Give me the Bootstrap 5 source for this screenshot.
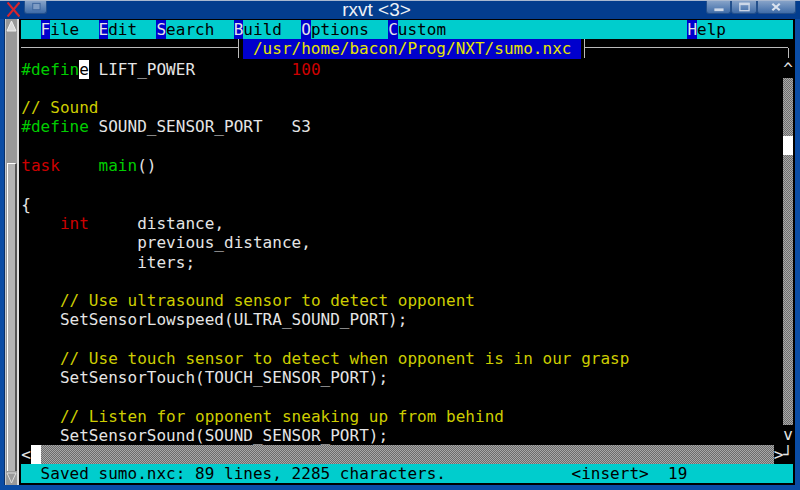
<!DOCTYPE html>
<html lang="en">
<head>
<meta charset="utf-8">
<title>rxvt</title>
<link rel="stylesheet" href="https://cdn.jsdelivr.net/npm/bootstrap@5.3.0/dist/css/bootstrap.min.css">
<style>
html,body{width:800px;height:490px;overflow:hidden;background:#0a4ca5;}
.wm-frame{width:800px;height:490px;background:#0a4ca5;}
.wm-title{height:19px;flex:none;background:#033d8e;border-top:1px solid #a8b8d0;color:#eef2f8;font:19px/17px "Liberation Sans",sans-serif;}
.wm-left{width:120px;}
.wm-right{width:167px;padding-right:4px;}
.wm-x{width:13px;height:15px;margin:1px 4px 0 7px;display:block;}
.wm-btn{height:13px;display:block;background:linear-gradient(#86a2c8,#3f6ca8);border:1px solid #23508c;border-top:0;border-radius:0 0 3px 3px;}
.btn-a{width:23px;}.btn-b{width:25px;}.btn-c{width:26px;}.btn-d{width:39px;}
.wm-glyph{width:100%;height:100%;display:block;}
.wm-body{height:466px;flex:none;padding:0 5px;}
.sb-left{width:14px;flex:none;background:#999;border-left:1px solid #c4c8cc;border-right:2px solid #ddd;box-shadow:-1px 0 0 #0a2f66;}
.sb-arrow{width:11px;height:14px;flex:none;display:block;}
.sb-thumb{flex:1;margin-top:130px;background:#b4b4b4;border-top:1px solid #fff;border-left:1px solid #fff;border-right:2px solid #555;margin-left:1px;}
.term{flex:1;background:#000;color:#e5e5e5;font:16px/19.3px "DejaVu Sans Mono",monospace;letter-spacing:.02px;padding:1px 2px 0 2.3px;}
.term-line{height:19.3px;white-space:pre;flex:none;}
.menu-bar{background:#00cdcd;color:#000;}
.menu-bar b{font-weight:400;background:#0000cd;color:#e5e5e5;}
.file-row{height:19.3px;flex:none;}
.rule{height:1px;background:#bbb;margin-bottom:2px;}
.rule-a{width:217px;flex:none;}
.rule-b{flex:1;}
.tick{width:1px;height:19px;background:#bbb;flex:none;}
.tick-a{margin-right:4px;}
.tick-b{margin-left:3px;}
.tick-c{height:10px;margin:9px 4.5px 0 0;}
.file-name{background:#0000cd;color:#e5e500;padding:0 9.65px;}
.code-row{flex:none;height:386px;}
.text-zone{flex:1;padding-top:1px;min-width:0;}
.c-g{color:#00cd00;}.c-r{color:#cd0000;}.c-y{color:#cdcd00;}
.cursor{background:#fff;color:#000;}
.vbar{width:9.65px;flex:none;}
.hatch{background-color:#8a8a8a;background-image:conic-gradient(#6c6c6c 25%,#a8a8a8 0 50%,#6c6c6c 0 75%,#a8a8a8 0);background-size:2px 2px;}
.v-track{flex:1;}
.v-thumb{height:19px;background:#fff;margin-top:58px;}
.hbar{height:19.3px;flex:none;}
.h-track{flex:1;}
.h-thumb{width:9.65px;background:#fff;flex:none;}
.status-bar{background:#00cdcd;color:#000;}
</style>
</head>
<body class="m-0">
<div class="wm-frame d-flex flex-column">
  <div class="wm-title d-flex">
    <div class="wm-left d-flex align-items-start">
      <svg class="wm-x" viewBox="0 0 13 15"><path d="M0.5 0.5 L12.5 14.5 M12.5 0.5 L0.5 14.5" stroke="#d8242c" stroke-width="2.2" fill="none"/></svg>
      <span class="wm-btn btn-a"><svg class="wm-glyph" viewBox="0 0 23 13"><rect x="8.5" y="2.5" width="8" height="7" fill="#7f9cc4" stroke="#3a639c"/></svg></span>
    </div>
    <div class="flex-grow-1 text-center">rxvt &lt;3&gt;</div>
    <div class="wm-right d-flex justify-content-end align-items-start">
      <span class="wm-btn btn-b"><svg class="wm-glyph" viewBox="0 0 25 13"><rect x="8" y="8" width="10" height="3" fill="#cdd8e8"/></svg></span>
      <span class="wm-btn btn-c"><svg class="wm-glyph" viewBox="0 0 26 13"><rect x="8.5" y="2.5" width="10" height="8" fill="none" stroke="#cdd8e8" stroke-width="1.4"/><rect x="8" y="2" width="11" height="2.5" fill="#cdd8e8"/></svg></span>
      <span class="wm-btn btn-d"><svg class="wm-glyph" viewBox="0 0 39 13"><path d="M15 3 L23 10 M23 3 L15 10" stroke="#dbe3ef" stroke-width="2.4" fill="none"/></svg></span>
    </div>
  </div>
  <div class="wm-body d-flex">
    <div class="sb-left d-flex flex-column">
      <svg class="sb-arrow" viewBox="0 0 11 14"><path d="M5.5 2 L10 12 H1 Z" fill="#d8d8d8" stroke="#eee"/></svg>
      <div class="sb-thumb"></div>
      <svg class="sb-arrow" viewBox="0 0 11 14"><path d="M5.5 12 L10 2 H1 Z" fill="#999" stroke="#ddd"/></svg>
    </div>
    <div class="term d-flex flex-column">
      <div class="menu-bar term-line">  <b>F</b>ile  <b>E</b>dit  <b>S</b>earch  <b>B</b>uild  <b>O</b>ptions  <b>C</b>ustom                         <b>H</b>elp</div>
      <div class="file-row d-flex align-items-center">
        <div class="rule rule-a"></div><div class="tick tick-a"></div>
        <div class="file-name term-line">/usr/home/bacon/Prog/NXT/sumo.nxc</div>
        <div class="tick tick-b"></div><div class="rule rule-b"></div><div class="tick tick-c align-self-start"></div>
      </div>
      <div class="code-row d-flex">
        <div class="text-zone">
<div class="term-line"><span class="c-g">#defin</span><span class="cursor">e</span> LIFT_POWER          <span class="c-r">100</span></div>
<div class="term-line"></div>
<div class="term-line c-y">// Sound</div>
<div class="term-line"><span class="c-g">#define</span> SOUND_SENSOR_PORT   S3</div>
<div class="term-line"></div>
<div class="term-line"><span class="c-r">task</span>    <span class="c-g">main</span>()</div>
<div class="term-line"></div>
<div class="term-line">{</div>
<div class="term-line">    <span class="c-r">int</span>     distance,</div>
<div class="term-line">            previous_distance,</div>
<div class="term-line">            iters;</div>
<div class="term-line"></div>
<div class="term-line c-y">    // Use ultrasound sensor to detect opponent</div>
<div class="term-line">    SetSensorLowspeed(ULTRA_SOUND_PORT);</div>
<div class="term-line"></div>
<div class="term-line c-y">    // Use touch sensor to detect when opponent is in our grasp</div>
<div class="term-line">    SetSensorTouch(TOUCH_SENSOR_PORT);</div>
<div class="term-line"></div>
<div class="term-line c-y">    // Listen for opponent sneaking up from behind</div>
<div class="term-line">    SetSensorSound(SOUND_SENSOR_PORT);</div>
        </div>
        <div class="vbar d-flex flex-column">
          <div class="term-line">^</div>
          <div class="v-track hatch"><div class="v-thumb"></div></div>
          <div class="term-line">v</div>
        </div>
      </div>
      <div class="hbar d-flex">
        <span class="term-line">&lt;</span><div class="h-thumb"></div><div class="h-track hatch"></div><span class="term-line">&gt;┘</span>
      </div>
      <div class="status-bar term-line">  Saved sumo.nxc: 89 lines, 2285 characters.             &lt;insert&gt;  19</div>
    </div>
  </div>
</div>
</body>
</html>
